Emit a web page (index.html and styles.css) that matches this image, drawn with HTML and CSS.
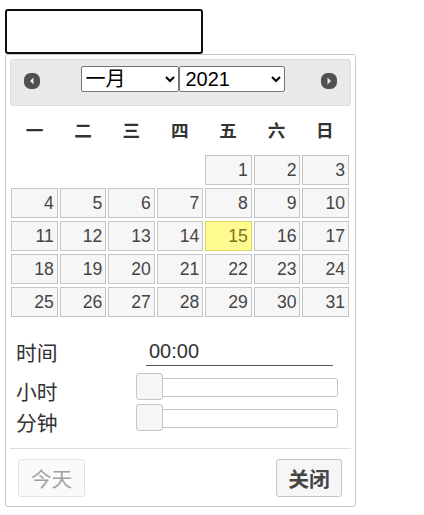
FILE: index.html
```html
<!DOCTYPE html>
<html lang="zh-CN">
<head>
    <meta charset="UTF-8">
    <title>日期时间选择</title>
    <link rel="stylesheet" href="styles.css">
</head>
<body>
    <input type="text" class="date-input">

    <div class="picker">
        <div class="picker-header">
            <svg class="nav-icon" viewBox="0 0 16 16"><rect class="nav-bg" width="16" height="16" rx="6.500"/><path class="nav-arrow" d="M9.500 4.500v7L6 8z"/></svg>
            <div class="picker-selects">
                <select class="month-select">
                    <option>一月</option>
                </select>
                <select class="year-select">
                    <option>2021</option>
                </select>
            </div>
            <svg class="nav-icon" viewBox="0 0 16 16"><rect class="nav-bg" width="16" height="16" rx="6.500"/><path class="nav-arrow" d="M6.500 4.500v7L10 8z"/></svg>
        </div>

        <div class="weekdays">
            <span>一</span><span>二</span><span>三</span><span>四</span><span>五</span><span>六</span><span>日</span>
        </div>

        <div class="days">
            <a class="day first-day">1</a><a class="day">2</a><a class="day">3</a>
            <a class="day">4</a><a class="day">5</a><a class="day">6</a><a class="day">7</a><a class="day">8</a><a class="day">9</a><a class="day">10</a>
            <a class="day">11</a><a class="day">12</a><a class="day">13</a><a class="day">14</a><a class="day today">15</a><a class="day">16</a><a class="day">17</a>
            <a class="day">18</a><a class="day">19</a><a class="day">20</a><a class="day">21</a><a class="day">22</a><a class="day">23</a><a class="day">24</a>
            <a class="day">25</a><a class="day">26</a><a class="day">27</a><a class="day">28</a><a class="day">29</a><a class="day">30</a><a class="day">31</a>
        </div>

        <div class="time-panel">
            <div class="time-row time-value-row">
                <span class="time-label">时间</span>
                <span class="time-value">00:00</span>
            </div>
            <div class="time-row hour-row">
                <span class="time-label">小时</span>
                <div class="slider"><span class="slider-handle"></span></div>
            </div>
            <div class="time-row minute-row">
                <span class="time-label">分钟</span>
                <div class="slider"><span class="slider-handle"></span></div>
            </div>
        </div>

        <div class="picker-buttons">
            <button type="button" class="btn btn-today">今天</button>
            <button type="button" class="btn btn-close">关闭</button>
        </div>
    </div>
</body>
</html>
```

FILE: styles.css
```css
* {
    box-sizing: border-box;
}

body {
    margin: 0;
    padding: 9px 5px 0;
    background: white;
    font-family: "Liberation Sans", "Noto Sans CJK SC", sans-serif;
    font-size: 17.6px;
    color: #333333;
}

.date-input {
    display: block;
    width: 198px;
    height: 45px;
    border: 2px solid #101010;
    border-radius: 3px;
    background: white;
    outline: none;
}

.picker {
    width: 351px;
    height: 453px;
    padding: 4px;
    border: 1px solid #c5c5c5;
    border-radius: 3px;
    background: white;
}

.picker-header {
    display: flex;
    align-items: center;
    justify-content: space-between;
    height: 47px;
    padding: 0 13px 8px;
    border: 1px solid #dddddd;
    border-radius: 3px;
    background: #e9e9e9;
}

.nav-icon {
    width: 16px;
    height: 16px;
    margin-top: 4px;
}

.nav-bg {
    fill: #505050;
}

.nav-arrow {
    fill: #e9e9e9;
}

.picker-selects {
    display: flex;
    margin-left: 4px;
}

.picker-selects select {
    height: 26px;
    padding: 0;
    border: 1px solid #767676;
    border-radius: 2px;
    background: white;
    color: black;
    font-family: inherit;
    font-size: 20px;
}

.month-select {
    width: 98px;
}

.picker-selects .year-select {
    width: 106px;
    padding-left: 2px;
}

.weekdays {
    display: grid;
    grid-template-columns: repeat(7, 1fr);
    column-gap: 2px;
    height: 49px;
    padding: 0 3px 2px 1.500px;
    align-items: center;
    text-align: center;
    font-weight: bold;
}

.days {
    display: grid;
    grid-template-columns: repeat(7, 1fr);
    grid-auto-rows: 30px;
    gap: 3px 2px;
    padding: 0 2px 0 1.200px;
}

.day {
    padding: 1px 3px 0 0;
    border: 1px solid #c5c5c5;
    background: #f6f6f6;
    color: #454545;
    line-height: 26px;
    text-align: right;
}

.first-day {
    grid-column-start: 5;
}

.today {
    border-color: #dad55e;
    background: #fffa90;
    color: #777620;
}

.time-panel {
    height: 114px;
    border-bottom: 1px solid #dddddd;
}

.time-row {
    display: flex;
    align-items: center;
    padding-left: 6px;
}

.time-label {
    width: 120px;
    flex: none;
    font-size: 20.800px;
    line-height: 26px;
}

.time-value-row {
    height: 34px;
    margin-top: 18px;
}

.time-value-row .time-label {
    margin-top: 4px;
}

.time-value {
    width: 187px;
    height: 28px;
    margin-left: 10px;
    padding-left: 3px;
    border-bottom: 1px solid #555555;
    font-size: 20px;
    line-height: 26px;
}

.hour-row {
    height: 24px;
    margin-top: 12px;
}

.minute-row {
    height: 24px;
    margin-top: 7px;
}

.slider {
    position: relative;
    width: 201px;
    height: 19px;
    margin: 0 0 12px 1px;
    border: 1px solid #c5c5c5;
    border-radius: 3px;
    background: white;
}

.slider-handle {
    position: absolute;
    top: -6px;
    left: -2px;
    width: 27px;
    height: 27px;
    border: 1px solid #c5c5c5;
    border-radius: 3px;
    background: #f6f6f6;
}

.picker-buttons {
    display: flex;
    justify-content: space-between;
    padding: 10px 9px 0 8px;
}

.btn {
    height: 38px;
    padding: 0;
    border: 1px solid #c5c5c5;
    border-radius: 3px;
    background: #f6f6f6;
    color: #454545;
    font-family: inherit;
    font-size: 20.800px;
}

.btn-today {
    width: 67px;
    opacity: 0.5;
}

.btn-close {
    width: 66px;
    font-weight: bold;
}
```
